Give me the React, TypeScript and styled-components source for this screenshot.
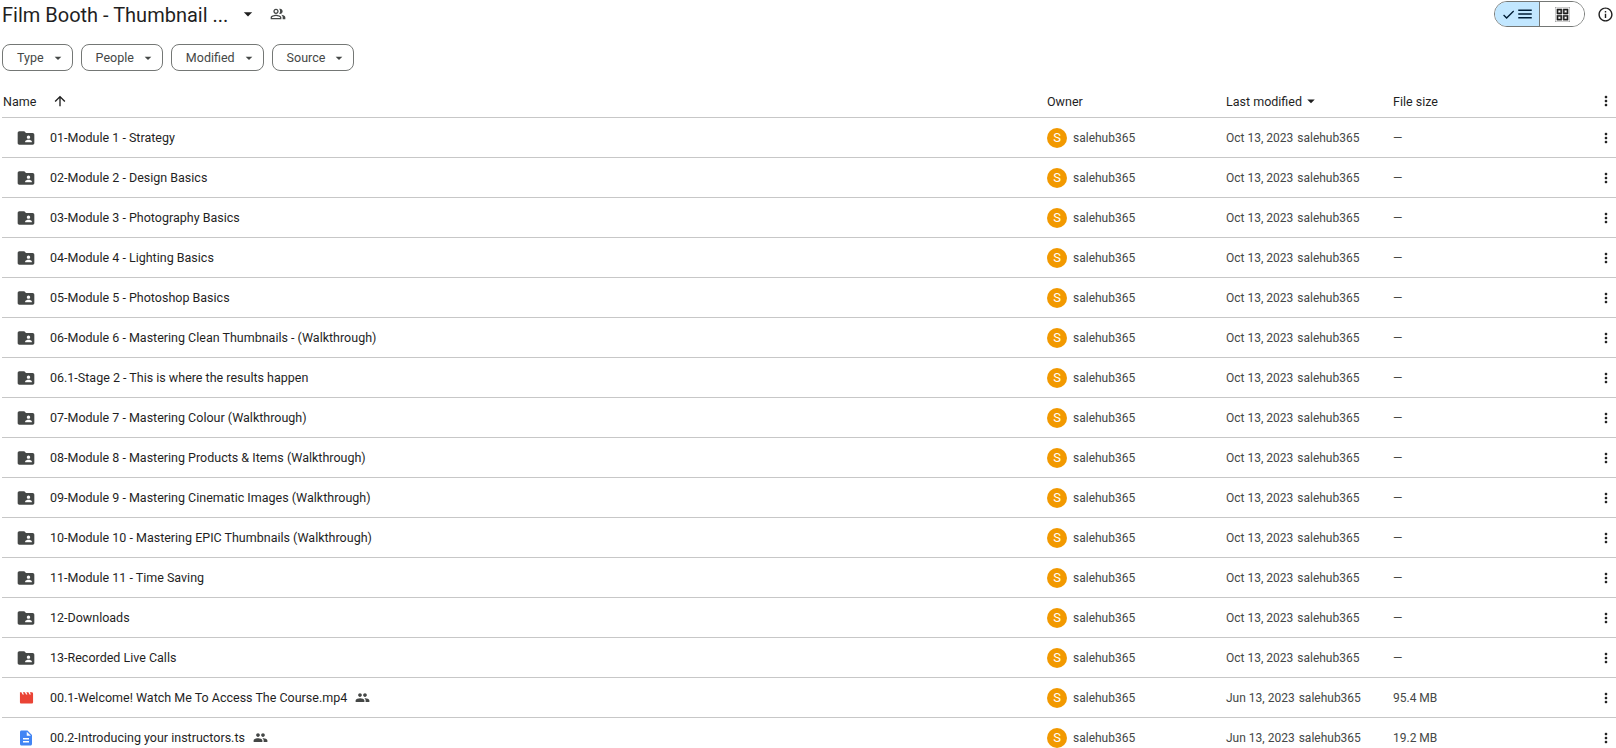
import React from "react";
import styled, { createGlobalStyle } from "styled-components";
import {
  MdArrowDropDown,
  MdArrowUpward,
  MdCheck,
  MdDescription,
  MdFolderShared,
  MdInfoOutline,
  MdMenu,
  MdMoreVert,
  MdOutlineGridView,
  MdOutlinePeopleAlt,
  MdPeople,
} from "react-icons/md";

interface DriveFile {
  name: string;
  kind: "folder" | "video" | "doc";
  date: string;
  size: string;
}

const folderNames = [
  "01-Module 1 - Strategy",
  "02-Module 2 - Design Basics",
  "03-Module 3 - Photography Basics",
  "04-Module 4 - Lighting Basics",
  "05-Module 5 - Photoshop Basics",
  "06-Module 6 - Mastering Clean Thumbnails - (Walkthrough)",
  "06.1-Stage 2 - This is where the results happen",
  "07-Module 7 - Mastering Colour (Walkthrough)",
  "08-Module 8 - Mastering Products & Items (Walkthrough)",
  "09-Module 9 - Mastering Cinematic Images (Walkthrough)",
  "10-Module 10 - Mastering EPIC Thumbnails (Walkthrough)",
  "11-Module 11 - Time Saving",
  "12-Downloads",
  "13-Recorded Live Calls",
];

const files: DriveFile[] = [
  ...folderNames.map((name): DriveFile => ({ name, kind: "folder", date: "Oct 13, 2023", size: "—" })),
  { name: "00.1-Welcome! Watch Me To Access The Course.mp4", kind: "video", date: "Jun 13, 2023", size: "95.4 MB" },
  { name: "00.2-Introducing your instructors.ts", kind: "doc", date: "Jun 13, 2023", size: "19.2 MB" },
];

const VideoIcon = () => (
  <svg width="15" height="15" viewBox="0 0 16 16">
    <path
      fill="#ea4335"
      d="M1 2.5h1.6l1.2 2.4h1.5L4.1 2.5h2.2l1.2 2.4H9L7.8 2.5H10l1.2 2.4h1.5l-1.2-2.4h2.1c.8 0 1.4.6 1.4 1.4v9.2c0 .8-.6 1.4-1.4 1.4H2.4c-.8 0-1.4-.6-1.4-1.4V2.5z"
    />
  </svg>
);

const fileIcon = (kind: DriveFile["kind"]) => {
  if (kind === "folder") return <MdFolderShared size={20} color="#444746" />;
  if (kind === "video") return <VideoIcon />;
  return <MdDescription size={18} color="#4285f4" />;
};

const App = () => (
  <Page>
    <GlobalStyle />
    <TitleBar>
      <TitleGroup>
        <Title>Film Booth - Thumbnail ...</Title>
        <TitleCaret>
          <MdArrowDropDown size={20} />
        </TitleCaret>
        <MdOutlinePeopleAlt size={16} color="#444746" />
      </TitleGroup>
      <TitleActions>
        <ViewToggle>
          <ToggleSide $active>
            <MdCheck size={15} />
            <MdMenu size={18} />
          </ToggleSide>
          <ToggleSide>
            <MdOutlineGridView size={15} stroke="currentColor" strokeWidth={0.7} />
          </ToggleSide>
        </ViewToggle>
        <MdInfoOutline size={17} color="#1f1f1f" />
      </TitleActions>
    </TitleBar>

    <Filters>
      {["Type", "People", "Modified", "Source"].map((label) => (
        <Chip key={label}>
          {label}
          <MdArrowDropDown size={16} />
        </Chip>
      ))}
    </Filters>

    <HeaderRow>
      <NameHeader>
        Name
        <MdArrowUpward size={16} />
      </NameHeader>
      <span>Owner</span>
      <ModifiedHeader>
        Last modified
        <MdArrowDropDown size={18} />
      </ModifiedHeader>
      <span>File size</span>
      <MoreCell>
        <MdMoreVert size={16} />
      </MoreCell>
    </HeaderRow>

    {files.map((file) => (
      <Row key={file.name}>
        <NameCell>
          <IconSlot>{fileIcon(file.kind)}</IconSlot>
          <FileName>{file.name}</FileName>
          {file.kind !== "folder" && <MdPeople size={15} color="#444746" />}
        </NameCell>
        <OwnerCell>
          <Avatar>S</Avatar>
          salehub365
        </OwnerCell>
        <ModifiedCell>
          <span>{file.date}</span>
          <span>salehub365</span>
        </ModifiedCell>
        <span>{file.size}</span>
        <MoreCell>
          <MdMoreVert size={16} />
        </MoreCell>
      </Row>
    ))}
  </Page>
);

const GlobalStyle = createGlobalStyle`
  html, body {
    margin: 0;
    background: #fff;
    overflow: hidden;
  }
`;

const Page = styled.div`
  height: 748px;
  overflow: hidden;
  padding-left: 2px;
  font-family: Roboto, "Liberation Sans", sans-serif;
  color: #1f1f1f;
`;

const TitleBar = styled.div`
  height: 28px;
  display: flex;
  align-items: center;
  justify-content: space-between;
`;

const TitleGroup = styled.div`
  display: flex;
  align-items: center;
`;

const Title = styled.div`
  width: 236px;
  padding-top: 2px;
  font-size: 20px;
  line-height: 30px;
  white-space: nowrap;
`;

const TitleCaret = styled.span`
  display: flex;
  width: 32px;
  color: #1f1f1f;
`;

const TitleActions = styled.div`
  display: flex;
  align-items: center;
  gap: 12px;
  padding-right: 2px;
`;

const ViewToggle = styled.div`
  width: 91px;
  height: 26px;
  display: flex;
  box-sizing: border-box;
  border: 1px solid #747775;
  border-radius: 14px;
  overflow: hidden;
`;

const ToggleSide = styled.div<{ $active?: boolean }>`
  flex: ${(p) => (p.$active ? "0 0 44px" : "1")};
  display: flex;
  align-items: center;
  justify-content: center;
  background: ${(p) => (p.$active ? "#c2e7ff" : "#fff")};
  color: ${(p) => (p.$active ? "#001d35" : "#1f1f1f")};
  border-right: ${(p) => (p.$active ? "1px solid #747775" : "none")};
`;

const Filters = styled.div`
  display: flex;
  gap: 8px;
  margin-top: 16px;
`;

const Chip = styled.div`
  height: 27px;
  box-sizing: border-box;
  display: flex;
  align-items: center;
  gap: 6px;
  padding: 0 6px 0 14px;
  border: 1px solid #747775;
  border-radius: 8px;
  font-size: 12.5px;
  color: #444746;
`;

const gridColumns = "1045px 179px 167px 1fr 18px";

const HeaderRow = styled.div`
  display: grid;
  grid-template-columns: ${gridColumns};
  align-items: center;
  height: 47px;
  box-sizing: border-box;
  border-bottom: 1px solid #c7c7c7;
  font-size: 12.5px;
  padding-top: 14px;
  color: #1f1f1f;
`;

const NameHeader = styled.div`
  display: flex;
  align-items: center;
  gap: 16px;
  padding-left: 1px;
`;

const ModifiedHeader = styled.div`
  display: flex;
  align-items: center;
`;

const Row = styled.div`
  display: grid;
  grid-template-columns: ${gridColumns};
  align-items: center;
  height: 40px;
  box-sizing: border-box;
  border-bottom: 1px solid #c7c7c7;
  font-size: 12px;
  color: #444746;
`;

const NameCell = styled.div`
  display: flex;
  align-items: center;
  gap: 8px;
`;

const IconSlot = styled.span`
  display: flex;
  justify-content: center;
  width: 20px;
  margin-left: 14px;
  margin-right: 6px;
`;

const FileName = styled.span`
  color: #1f1f1f;
  font-size: 12.5px;
`;

const OwnerCell = styled.div`
  display: flex;
  align-items: center;
  gap: 6px;
`;

const Avatar = styled.span`
  width: 20px;
  height: 20px;
  display: flex;
  align-items: center;
  justify-content: center;
  border-radius: 50%;
  background: #f29900;
  color: #fff;
  font-size: 13px;
`;

const ModifiedCell = styled.div`
  display: flex;
  gap: 4px;
`;

const MoreCell = styled.span`
  display: flex;
  justify-content: flex-start;
  color: #1f1f1f;
`;

export default App;
